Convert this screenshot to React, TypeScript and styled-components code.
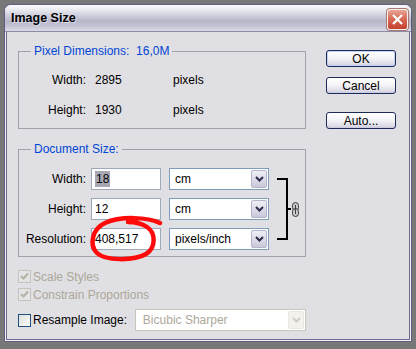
import React from 'react';
import styled, { createGlobalStyle } from 'styled-components';

const Global = createGlobalStyle`
  html, body {
    margin: 0;
    background: #787878;
  }
  body {
    font-family: "Liberation Sans", Arial, sans-serif;
    font-size: 12px;
    color: #000;
  }
`;

const Window = styled.div`
  position: relative;
  margin: 4px 0 0 4px;
  width: 404px;
  border: 1px solid #5f5e80;
  border-radius: 7px 7px 0 0;
  background: #f2f2f6;
  padding: 0 1px 1px;
`;

const TitleBar = styled.div`
  display: flex;
  align-items: center;
  justify-content: space-between;
  height: 26px;
  margin: 0 -1px;
  padding: 0 3px 0 6px;
  border-radius: 6px 6px 0 0;
  border-bottom: 1px solid #8d8ca8;
  background: linear-gradient(
    to bottom,
    #fdfdfe 0%,
    #eaeaf0 18%,
    #cfcfdd 40%,
    #b7b7cb 62%,
    #c4c4d5 82%,
    #dcdce6 100%
  );
`;

const Title = styled.span`
  font-weight: bold;
  font-size: 12.5px;
  color: #000;
  text-shadow: 1px 1px 0 rgba(255, 255, 255, 0.5);
`;

const CloseButton = styled.div`
  width: 19px;
  height: 19px;
  margin-top: 3px;
  border: 1px solid #f4f0f0;
  border-radius: 3px;
  box-shadow: 0 0 0 1px #a9786f;
  background: linear-gradient(to bottom, #eaa597 0%, #d86b58 45%, #c4412f 100%);
  display: flex;
  align-items: center;
  justify-content: center;
`;

const Body = styled.div`
  display: flex;
  height: 295px;
  padding: 12px 0 0 11px;
  background: #e0dfe3;
  border: 1px solid #6d6b8d;
  border-top: none;
`;

const LeftColumn = styled.div`
  width: 288px;
  display: flex;
  flex-direction: column;
`;

const RightColumn = styled.div`
  margin: 6px 0 0 20px;
  display: flex;
  flex-direction: column;
`;

const Group = styled.fieldset<{ $gap?: number }>`
  margin: ${(p) => p.$gap ?? 0}px 0 0;
  padding: 0;
  min-width: 0;
  width: 288px;
  box-sizing: border-box;
  border: 1px solid #a2a1a8;
`;

const GroupTitle = styled.legend`
  margin-left: 12px;
  padding: 0 3px;
  color: #0046d5;
  font-size: 12px;
  line-height: 14px;
  white-space: pre;
`;

const PixelGrid = styled.div`
  display: grid;
  grid-template-columns: 67px 69px auto;
  grid-auto-rows: 20px;
  column-gap: 9px;
  row-gap: 10px;
  align-items: center;
  padding: 12px 0 8px;
`;

const DocGrid = styled.div`
  display: grid;
  grid-template-columns: 72px 78px 108px 24px;
  grid-template-rows: repeat(3, 22px);
  row-gap: 8px;
  align-items: center;
  padding: 12px 0 6px;
`;

const Label = styled.span<{ $pad?: number }>`
  text-align: right;
  padding-right: ${(p) => p.$pad ?? 0}px;
`;

const Field = styled.div`
  width: 70px;
  height: 22px;
  box-sizing: border-box;
  border: 1px solid #9ea9b9;
  background: #fff;
  padding-left: 3px;
  display: flex;
  align-items: center;
`;

const Selected = styled.span`
  background: #a8a8b4;
  line-height: 16px;
  padding: 0 1px;
`;

const Select = styled.div<{ $width: number; $disabled?: boolean }>`
  width: ${(p) => p.$width}px;
  height: 22px;
  box-sizing: border-box;
  border: 1px solid ${(p) => (p.$disabled ? '#c9c7ba' : '#7f9db9')};
  background: #fff;
  color: ${(p) => (p.$disabled ? '#aca899' : '#000')};
  display: flex;
  align-items: center;
  justify-content: space-between;
  padding: 1px 1px 1px ${(p) => (p.$disabled ? 7 : 5)}px;
`;

const DropButton = styled.div<{ $disabled?: boolean }>`
  width: 16px;
  height: 18px;
  box-sizing: border-box;
  border: 1px solid ${(p) => (p.$disabled ? '#e8e7e0' : '#b5b4cc')};
  border-radius: 2px;
  background: ${(p) =>
    p.$disabled
      ? '#f2f1ec'
      : 'linear-gradient(to bottom, #eeeef5 0%, #d9d9e6 60%, #c8c8da 100%)'};
  display: flex;
  align-items: center;
  justify-content: center;
`;

const LinkArea = styled.div`
  grid-column: 4;
  grid-row: 1 / span 3;
  align-self: stretch;
  display: flex;
  align-items: center;
`;

const Bracket = styled.div`
  align-self: stretch;
  width: 9px;
  margin: 10px 0;
  border: 2px solid #000;
  border-left: none;
`;

const Tick = styled.div`
  width: 3px;
  height: 2px;
  background: #000;
  margin-right: 1px;
`;

const Checks = styled.div`
  margin-top: 13px;
  display: flex;
  flex-direction: column;
  gap: 5px;
`;

const CheckRow = styled.div<{ $disabled?: boolean; $tall?: boolean }>`
  display: flex;
  align-items: center;
  gap: 2px;
  height: ${(p) => (p.$tall ? 22 : 13)}px;
  margin-top: ${(p) => (p.$tall ? 3 : 0)}px;
  color: ${(p) => (p.$disabled ? '#aca899' : '#000')};
`;

const Box = styled.div<{ $disabled?: boolean }>`
  width: 13px;
  height: 13px;
  box-sizing: border-box;
  border: 1px solid ${(p) => (p.$disabled ? '#c5c3bb' : '#1c5180')};
  background: ${(p) =>
    p.$disabled ? '#e4e3e6' : 'linear-gradient(135deg, #dcdcd7 0%, #ffffff 100%)'};
  display: flex;
  align-items: center;
  justify-content: center;
  flex: none;
`;

const ResampleLabel = styled.span`
  width: 101px;
`;

const Button = styled.div<{ $default?: boolean; $gap?: number }>`
  width: 70px;
  height: 17px;
  box-sizing: border-box;
  margin-top: ${(p) => p.$gap ?? 0}px;
  border: 1px solid #1d2b5a;
  border-radius: 3px;
  background: linear-gradient(to bottom, #ffffff 0%, #f5f5f8 45%, #dddce8 85%, #c9c8da 100%);
  box-shadow: ${(p) => (p.$default ? 'inset 0 0 0 1px #c5d3f2' : 'none')};
  display: flex;
  align-items: center;
  justify-content: center;
  font-size: 12px;
`;

const Scribble = styled.svg`
  position: absolute;
  left: 79px;
  top: 209px;
  pointer-events: none;
`;

const Chevron: React.FC<{ color: string }> = ({ color }) => (
  <svg width="9" height="6" viewBox="0 0 9 6">
    <path d="M1 1 L4.5 4.5 L8 1" fill="none" stroke={color} strokeWidth="2" />
  </svg>
);

const Check: React.FC = () => (
  <svg width="9" height="9" viewBox="0 0 9 9">
    <path d="M1 4 L3.5 6.5 L8 1.5" fill="none" stroke="#b5b2a6" strokeWidth="2" />
  </svg>
);

const Chain: React.FC = () => (
  <svg width="7" height="15" viewBox="0 0 7 15">
    <rect x="0.5" y="0.5" width="6" height="8" rx="3" fill="#c9c9cc" stroke="#3a3a3a" />
    <rect x="0.5" y="6.5" width="6" height="8" rx="3" fill="#c9c9cc" stroke="#3a3a3a" />
    <line x1="3.5" y1="3" x2="3.5" y2="12" stroke="#3a3a3a" strokeWidth="1" />
  </svg>
);

const App: React.FC = () => (
  <>
    <Global />
    <Window>
      <TitleBar>
        <Title>Image Size</Title>
        <CloseButton>
          <svg width="11" height="11" viewBox="0 0 11 11">
            <path d="M1 1 L10 10 M10 1 L1 10" stroke="#fff" strokeWidth="2.2" />
          </svg>
        </CloseButton>
      </TitleBar>
      <Body>
        <LeftColumn>
          <Group>
            <GroupTitle>Pixel Dimensions:  16,0M</GroupTitle>
            <PixelGrid>
              <Label>Width:</Label>
              <span>2895</span>
              <span>pixels</span>
              <Label>Height:</Label>
              <span>1930</span>
              <span>pixels</span>
            </PixelGrid>
          </Group>
          <Group $gap={13}>
            <GroupTitle>Document Size:</GroupTitle>
            <DocGrid>
              <Label $pad={5}>Width:</Label>
              <Field>
                <Selected>18</Selected>
              </Field>
              <Select $width={100}>
                cm
                <DropButton>
                  <Chevron color="#2b2b4a" />
                </DropButton>
              </Select>
              <LinkArea>
                <Bracket />
                <Tick />
                <Chain />
              </LinkArea>
              <Label $pad={5}>Height:</Label>
              <Field>12</Field>
              <Select $width={100}>
                cm
                <DropButton>
                  <Chevron color="#2b2b4a" />
                </DropButton>
              </Select>
              <Label $pad={5}>Resolution:</Label>
              <Field>408,517</Field>
              <Select $width={100}>
                pixels/inch
                <DropButton>
                  <Chevron color="#2b2b4a" />
                </DropButton>
              </Select>
            </DocGrid>
          </Group>
          <Checks>
            <CheckRow $disabled>
              <Box $disabled>
                <Check />
              </Box>
              Scale Styles
            </CheckRow>
            <CheckRow $disabled>
              <Box $disabled>
                <Check />
              </Box>
              Constrain Proportions
            </CheckRow>
            <CheckRow $tall>
              <Box />
              <ResampleLabel>Resample Image:</ResampleLabel>
              <Select $width={173} $disabled>
                Bicubic Sharper
                <DropButton $disabled>
                  <Chevron color="#cfcdc2" />
                </DropButton>
              </Select>
            </CheckRow>
          </Checks>
        </LeftColumn>
        <RightColumn>
          <Button $default>OK</Button>
          <Button $gap={10}>Cancel</Button>
          <Button $gap={18}>Auto...</Button>
        </RightColumn>
      </Body>
      <Scribble width="82" height="52" viewBox="0 0 82 52">
        <path
          d="M76 9 C64 3 36 2 21 9 C8 15 5 31 13 39 C21 47 50 47 62 40 C72 34 72 19 63 13 C57 9 49 8 44 8"
          fill="none"
          stroke="#ff0a0a"
          strokeWidth="4.5"
          strokeLinecap="round"
          strokeLinejoin="round"
        />
      </Scribble>
    </Window>
  </>
);

export default App;
